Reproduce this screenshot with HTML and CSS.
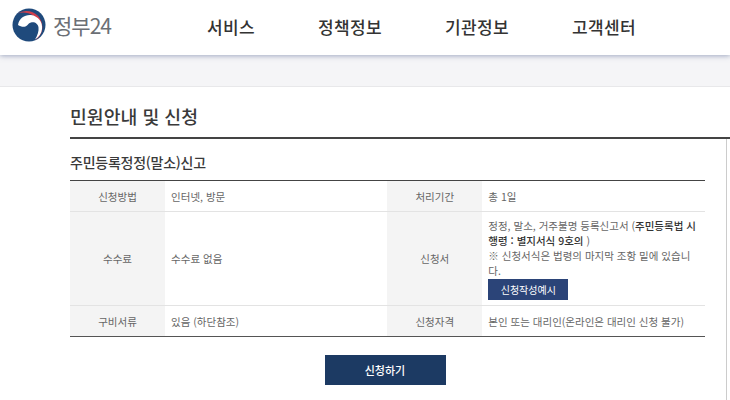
FILE: index.html
```html
<!DOCTYPE html>
<html lang="ko">
<head>
<meta charset="utf-8">
<title>정부24</title>
<link rel="stylesheet" href="styles.css">
</head>
<body>
<header class="topbar">
  <a class="logo">
    <svg class="logo-mark" viewBox="0 0 34 34" width="34" height="34">
      <circle cx="17" cy="17" r="16.500" fill="#1f4a7c"/>
      <path d="M5.500 5.500A16.500 16.500 0 0 1 23 32.500A14 14 0 0 0 5.500 5.500Z" fill="#cf3f4d"/>
      <path d="M6 17C7 10 13 6.500 19 7C26 8 31 14 30 21C29.500 25.500 27 29 23 31.500C25.500 27.500 27 23 26.500 19.500C26 15.500 22.500 13.500 19 14.500C17 15 16 16.500 15 17.500C13 19.500 9 19 6 17Z" fill="#fff"/>
    </svg>
    <span class="logo-text">정부24</span>
  </a>
  <nav class="gnb">
    <a>서비스</a>
    <a>정책정보</a>
    <a>기관정보</a>
    <a>고객센터</a>
  </nav>
</header>
<div class="band"></div>
<main class="content">
  <h1 class="page-title">민원안내 및 신청</h1>
  <section class="panel">
    <h2 class="sub-title">주민등록정정(말소)신고</h2>
    <table class="info">
      <colgroup><col class="c-th"><col class="c-td"><col class="c-th"><col class="c-td"></colgroup>
      <tr class="r-short">
        <th>신청방법</th><td>인터넷, 방문</td>
        <th>처리기간</th><td>총 1일</td>
      </tr>
      <tr>
        <th>수수료</th><td>수수료 없음</td>
        <th>신청서</th>
        <td class="form-cell">정정, 말소, 거주불명 등록신고서 (<b>주민등록법 시행령 : 별지서식 9호의</b> )<br>※ 신청서식은 법령의 마지막 조항 밑에 있습니다.<br><a class="mini-btn">신청작성예시</a></td>
      </tr>
      <tr class="r-short">
        <th>구비서류</th><td>있음 (하단참조)</td>
        <th>신청자격</th><td>본인 또는 대리인(온라인은 대리인 신청 불가)</td>
      </tr>
    </table>
    <div class="actions"><a class="apply-btn">신청하기</a></div>
  </section>
</main>
</body>
</html>
```
FILE: styles.css
```css
* { box-sizing: border-box; }
html, body { margin: 0; padding: 0; }
body {
  width: 730px;
  height: 400px;
  overflow: hidden;
  background: #fff;
  font-family: "Noto Sans CJK KR", "Noto Sans", sans-serif;
  color: #555;
}
.topbar {
  height: 55px;
  display: flex;
  align-items: center;
  background: #fff;
  position: relative;
  box-shadow: 0 1px 5px rgba(90, 105, 150, .55);
}
.logo { display: flex; align-items: center; padding-left: 12px; width: 207px; margin-top: -5px; }
.logo-mark { display: block; flex: none; }
.logo-text { margin-left: 7px; font-size: 21px; letter-spacing: -1px; color: #6b6f75; line-height: 1; }
.gnb { display: flex; gap: 63px; margin-top: -2px; }
.gnb a { font-size: 17px; font-weight: 500; color: #333; line-height: 24px; letter-spacing: .35px; white-space: nowrap; }
.band { height: 32px; background: #f5f5f7; border-bottom: 1px solid #e8e8ea; }
.content { padding: 16px 0 0 70px; }
.page-title {
  margin: 0;
  font-size: 18.300px;
  font-weight: 500;
  line-height: 26px;
  color: #3a3a3a;
  padding-bottom: 8px;
  border-bottom: 2px solid #444;
}
.panel { padding: 13px 22px 0 0; border-right: 1px solid #ccc; margin-right: 3px; width: 657px; min-height: 270px; }
.sub-title { margin: 0 0 8px; font-size: 14px; font-weight: 500; line-height: 20px; color: #3a3a3a; letter-spacing: -.25px; }
.info {
  width: 635px;
  border-collapse: collapse;
  table-layout: fixed;
  border-top: 1px solid #444;
  border-bottom: 1px solid #555;
  font-size: 10.500px;
  line-height: 15px;
}
.c-th { width: 95px; }
.c-td { width: 222.500px; }
.c-td:nth-child(2) { width: 222px; }
.info tr + tr { border-top: 1px solid #e3e3e3; }
.r-short { height: 31px; }
.info th { background: #f4f4f4; font-weight: 400; color: #666; text-align: center; padding: 0; }
.info td { padding: 0 6px; color: #666; }
.info td.form-cell { padding: 6px 6px 5px; }
.info b { font-weight: 500; color: #333; }
.mini-btn {
  display: inline-block;
  vertical-align: top;
  width: 80px;
  height: 21px;
  margin-top: 1px;
  background: #2b4478;
  color: #fff;
  font-size: 10px;
  line-height: 21px;
  text-align: center;
}
.actions { display: flex; justify-content: center; padding: 18px 4px 0 0; }
.apply-btn {
  width: 121px;
  height: 30px;
  background: #1c3a63;
  color: #fff;
  font-size: 11px;
  font-weight: 500;
  line-height: 30px;
  text-align: center;
}
```
